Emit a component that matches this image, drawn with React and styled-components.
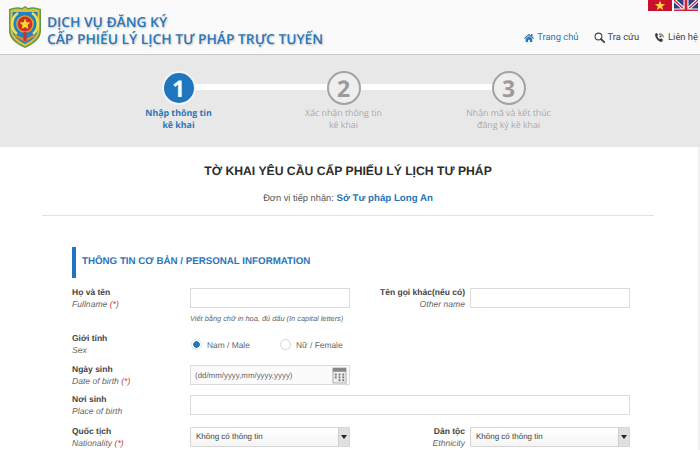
import React from 'react';
import styled, { createGlobalStyle } from 'styled-components';
import { FaHome } from 'react-icons/fa';

const Global = createGlobalStyle`
  html, body { margin: 0; padding: 0; background: #fff; overflow: hidden; }
  body { font-family: "Liberation Sans", Arial, sans-serif; color: #333; text-rendering: geometricPrecision; }
  * { box-sizing: border-box; }
`;

const Page = styled.div`width: 700px; height: 450px; overflow: hidden; display: flex; flex-direction: column;`;

const Header = styled.header`
  height: 55px; flex: none; background: #fafafa; border-bottom: 1px solid #c9c9c9;
  display: flex; justify-content: space-between; padding-left: 9px;
`;
const Brand = styled.div`display: flex; gap: 6px; align-items: flex-start; padding-top: 5px;`;
const BrandTitle = styled.div`
  padding-top: 9px; font-family: "Open Sans", sans-serif; font-weight: 600; font-size: 13.8px; line-height: 17px;
  color: #2a76b8; text-shadow: 1px 1px 2px rgba(0,0,0,.22); white-space: nowrap;
`;
const HeadRight = styled.div`display: flex; flex-direction: column; align-items: flex-end; width: 200px; padding-right: 2px;`;
const Flags = styled.div`display: flex; gap: 2px; height: 11px; overflow: hidden; svg { display: block; }`;
const Nav = styled.nav`display: flex; margin-top: 20px; gap: 15px; white-space: nowrap; font-family: "Roboto", sans-serif; font-size: 9.4px;`;
const NavItem = styled.a`display: flex; align-items: center; gap: 3px; height: 13px; color: ${p => p.$active ? '#2a76b8' : '#444'};`;

const Steps = styled.section`
  height: 92px; flex: none; background: #e8e8e8; padding: 16px 0 0 96px;
  display: grid; grid-template-columns: repeat(3, 165px); justify-content: start;
`;
const Step = styled.div`
  position: relative; display: flex; flex-direction: column; align-items: center;
  font-family: "Open Sans", sans-serif; font-size: 8.8px; line-height: 12px; text-align: center;
  color: ${p => p.$active ? '#2a76b8' : '#a9a9a9'}; font-weight: ${p => p.$active ? 700 : 400};
  &::before { content: ''; display: ${p => p.$last ? 'none' : 'block'}; position: absolute; left: 50%; width: 100%; top: 13px; height: 6px; background: #fff; }
`;
const Circle = styled.div`
  position: relative; width: 34px; height: 34px; border-radius: 50%; display: flex; align-items: center; justify-content: center;
  font-family: "Open Sans", sans-serif; font-weight: 700; font-size: 23px; line-height: 1;
  background: ${p => p.$active ? '#1f76bf' : '#eee'}; color: ${p => p.$active ? '#fff' : '#9b9b9b'};
  border: 2px solid ${p => p.$active ? '#f4f4f4' : '#a3a3a3'}; margin-bottom: 2px;
`;

const Main = styled.main`flex: 1; background: #fff; padding: 0 42px; border-right: 2px solid #f0f0f0;`;
const Title = styled.h1`margin: 16px 0 0; width: 612px; text-align: center; font-size: 12.2px; line-height: 17px; font-weight: 700; color: #2c2c2c;`;
const Receiver = styled.div`
  width: 612px; height: 24px; margin: 12px 0 31px; text-align: center; font-size: 9.3px; line-height: 13px; color: #555;
  border-bottom: 1px solid #e3e3e3;
  b { color: #2a76b8; font-size: 9.7px; }
`;
const Form = styled.div`padding-left: 30px; width: 588px;`;
const SectionHead = styled.h2`
  margin: 0 0 10px; height: 31px; border-left: 4px solid #1f76bf; padding: 0 0 2px 6px; display: flex; align-items: center;
  font-size: 9.76px; font-weight: 700; color: #2a76b8;
`;
const Row = styled.div`
  display: grid; grid-template-columns: 118px 160px 120px 160px; align-items: start; height: ${p => p.$h}px;
`;
const Label = styled.div`
  font-size: 8.6px; line-height: 11.5px; margin-top: -1px; color: #333; text-align: ${p => p.$right ? 'right' : 'left'};
  padding-right: ${p => p.$right ? '5px' : 0};
  b { display: block; font-weight: 700; color: #444; font-size: 8.5px; }
  i { color: #666; } em { color: #c33; }
`;
const Input = styled.div`
  height: 20px; border: 1px solid #dcdcdc; background: #fff; grid-column: ${p => p.$wide ? 'span 3' : 'auto'};
`;
const Hint = styled.div`font-size: 7.4px; line-height: 10px; font-style: italic; color: #666; margin-top: 6px; white-space: nowrap;`;
const DateInput = styled(Input)`
  display: flex; align-items: center; justify-content: space-between; background: #fbfbfb; padding: 0 2px 0 4px;
  font-size: 7.9px; color: #666; span { white-space: nowrap; }
`;
const Select = styled.div`
  height: 20px; border: 1px solid #d6d6d6; border-radius: 1px; background: linear-gradient(#fff, #f4f4f4);
  display: flex; justify-content: space-between; font-size: 8px; color: #444; line-height: 17px; padding-left: 5px;
`;
const Arrow = styled.div`
  width: 11px; background: #e0e0e0; border-left: 1px solid #cfcfcf; display: flex; align-items: center; justify-content: center;
  &::after { content: ''; border: 3px solid transparent; border-top: 4px solid #222; border-bottom: 0; }
`;
const Radios = styled.div`display: flex; grid-column: span 3; padding-top: 4px;`;
const Radio = styled.label`
  display: flex; align-items: center; gap: 5px; width: 89px; padding-left: 1px; font-size: 8.4px; color: #666; height: 13px;
`;
const Dot = styled.span`
  width: 11px; height: 11px; border-radius: 50%; border: 1px solid ${p => p.$on ? '#d7e6f2' : '#d4d4d4'}; background: ${p => p.$on ? 'radial-gradient(circle, #2a76b8 0 3px, #fff 3.6px)' : '#fff'};
`;

const Logo = () => (
  <svg width="32" height="43" viewBox="0 0 32 43">
    <path d="M0 4 Q8 1 13 3 L16 1 L19 3 Q24 1 32 4 V26 Q32 36 16 43 Q0 36 0 26Z" fill="#5f9a45" />
    <path d="M1.5 5 Q8 3 13 4.5 L16 2.5 L19 4.5 Q24 3 30.5 5 V26 Q30 35 16 41.5 Q2 35 1.5 26Z" fill="#e2bb37" />
    <path d="M3.5 7 H28.5 V26 Q28 33 16 39 Q4 33 3.5 26Z" fill="#1e83c6" />
    <path d="M9 8a13 13 0 0 0-1 21" fill="none" stroke="#e9e25a" strokeWidth="2.6" />
    <path d="M23 8a13 13 0 0 1 1 21" fill="none" stroke="#e9e25a" strokeWidth="2.6" />
    <circle cx="16" cy="19" r="8.8" fill="#e0a52c" />
    <circle cx="16" cy="19" r="7.4" fill="#d22f24" />
    <path d="M16 13.5l1.5 3.7 4 .3-3 2.6.9 3.9-3.4-2.1-3.4 2.1.9-3.9-3-2.6 4-.3z" fill="#f6d838" />
    <path d="M6 29l10 5 10-5v2.5l-10 5.5-10-5.5z" fill="#dd8a2c" />
    <path d="M14.5 27h3v9h-3z" fill="#c9352a" />
  </svg>
);
const VN = () => (
  <svg width="24" height="16" viewBox="0 0 24 16">
    <rect width="24" height="16" fill="#c8102e" />
    <path d="M12 .5l1.3 3.6 3.8.1-3 2.3 1.1 3.6-3.2-2.1-3.2 2.1 1.1-3.6-3-2.3 3.8-.1z" fill="#ffd83a" />
  </svg>
);
const UK = () => (
  <svg width="24" height="22" viewBox="0 -11 24 22">
    <rect y="-11" width="24" height="22" fill="#2b3f86" />
    <path d="M0-11L24 11M24-11L0 11" stroke="#fff" strokeWidth="3.5" />
    <path d="M0-11L24 11M24-11L0 11" stroke="#c8243a" strokeWidth="1.3" />
    <path d="M12-11V11M0 0H24" stroke="#fff" strokeWidth="5" />
    <path d="M12-11V11M0 0H24" stroke="#c8243a" strokeWidth="2.8" />
  </svg>
);
const SearchIcon = () => (
  <svg width="11" height="11" viewBox="0 0 11 11" fill="none" stroke="#444">
    <circle cx="4.5" cy="4.5" r="3.4" strokeWidth="1.1" />
    <path d="M7 7l3.2 3.2" strokeWidth="1.8" strokeLinecap="round" />
  </svg>
);
const PhoneIcon = () => (
  <svg width="11" height="11" viewBox="0 0 11 11">
    <path d="M1.2 1.8 L3 .9 L4.2 3 L3.2 3.9 Q3.8 6 6 7.3 L7 6.3 L9 7.8 L8.2 9.6 Q6.6 10.6 3.8 8.2 Q.6 5 1.2 1.8Z" fill="#3a3a3a" />
    <path d="M5 1.2 Q10 1 10 5.8 L8.6 5 Q8.4 3 5.2 2.9Z" fill="#8a8a8a" />
    <circle cx="6.5" cy="4.4" r="1.1" fill="#666" />
  </svg>
);
const Calendar = () => (
  <svg width="15" height="17" viewBox="0 0 16 18">
    <rect x="1" y="1" width="14" height="16" fill="#eee" stroke="#aaa" />
    <rect x="1" y="1" width="14" height="4" fill="#888" />
    <g fill="#777">
      <rect x="3" y="7" width="2" height="2" /><rect x="7" y="7" width="2" height="2" /><rect x="11" y="7" width="2" height="2" />
      <rect x="3" y="10" width="2" height="2" /><rect x="7" y="10" width="2" height="2" /><rect x="11" y="10" width="2" height="2" />
      <rect x="7" y="13" width="2" height="2" /><rect x="11" y="13" width="2" height="2" />
    </g>
  </svg>
);

export default function App() {
  return (
    <Page>
      <Global />
      <Header>
        <Brand>
          <Logo />
          <BrandTitle>DỊCH VỤ ĐĂNG KÝ<br />CẤP PHIẾU LÝ LỊCH TƯ PHÁP TRỰC TUYẾN</BrandTitle>
        </Brand>
        <HeadRight>
          <Flags><VN /><UK /></Flags>
          <Nav>
            <NavItem $active><FaHome size={10} color="#2a76b8" />Trang chủ</NavItem>
            <NavItem><SearchIcon />Tra cứu</NavItem>
            <NavItem><PhoneIcon />Liên hệ</NavItem>
          </Nav>
        </HeadRight>
      </Header>
      <Steps>
        <Step $active><Circle $active>1</Circle>Nhập thông tin<br />kê khai</Step>
        <Step><Circle>2</Circle>Xác nhận thông tin<br />kê khai</Step>
        <Step $last><Circle>3</Circle>Nhận mã và kết thúc<br />đăng ký kê khai</Step>
      </Steps>
      <Main>
        <Title>TỜ KHAI YÊU CẦU CẤP PHIẾU LÝ LỊCH TƯ PHÁP</Title>
        <Receiver>Đơn vị tiếp nhận: <b>Sở Tư pháp Long An</b></Receiver>
        <Form>
          <SectionHead>THÔNG TIN CƠ BẢN / PERSONAL INFORMATION</SectionHead>
          <Row $h={46}>
            <Label><b>Họ và tên</b><i>Fullname</i> <em>(*)</em></Label>
            <div><Input /><Hint>Viết bằng chữ in hoa, đủ dấu (In capital letters)</Hint></div>
            <Label $right><b>Tên gọi khác(nếu có)</b><i>Other name</i></Label>
            <Input />
          </Row>
          <Row $h={31}>
            <Label><b>Giới tính</b><i>Sex</i></Label>
            <Radios>
              <Radio><Dot $on />Nam / Male</Radio>
              <Radio><Dot />Nữ / Female</Radio>
            </Radios>
          </Row>
          <Row $h={30}>
            <Label><b>Ngày sinh</b><i>Date of birth</i> <em>(*)</em></Label>
            <DateInput><span>(dd/mm/yyyy,mm/yyyy,yyyy)</span><Calendar /></DateInput>
          </Row>
          <Row $h={32}>
            <Label><b>Nơi sinh</b><i>Place of birth</i></Label>
            <Input $wide />
          </Row>
          <Row $h={30}>
            <Label><b>Quốc tịch</b><i>Nationality</i> <em>(*)</em></Label>
            <Select>Không có thông tin<Arrow /></Select>
            <Label $right><b>Dân tộc</b><i>Ethnicity</i></Label>
            <Select>Không có thông tin<Arrow /></Select>
          </Row>
        </Form>
      </Main>
    </Page>
  );
}
